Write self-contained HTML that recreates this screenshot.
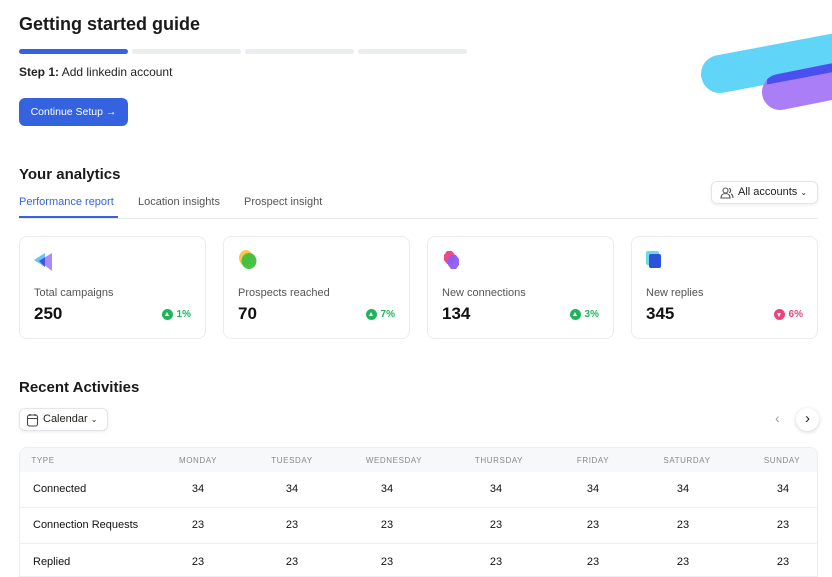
<!DOCTYPE html>
<html><head><meta charset="utf-8"><style>
*{margin:0;padding:0;box-sizing:border-box}
body{width:832px;height:570px;overflow:hidden;background:#fff;font-family:"Liberation Sans",sans-serif;color:#111;position:relative}
.a{position:absolute;white-space:nowrap}
.bar{position:absolute;top:49px;height:5px;border-radius:3px;background:#e9ecf1;width:109px}
.card{position:absolute;top:236px;width:187px;height:103px;border:1px solid #ececf0;border-radius:8px;background:#fff}
.card .l{position:absolute;left:14px;top:50px;font-size:11px;color:#555}
.card .v{position:absolute;left:14px;top:67px;font-size:17px;font-weight:bold;color:#111}
.card .b{position:absolute;right:14px;top:72px;font-size:10px;font-weight:bold;color:#22b35e;display:flex;align-items:center;gap:4px}
.card .b i{display:inline-block;width:11px;height:11px;border-radius:50%;background:#22b35e;position:relative}
.card .b i:after{content:"";position:absolute;left:3px;top:3px;border-left:2.5px solid transparent;border-right:2.5px solid transparent;border-bottom:4px solid #fff}
.card .b.r{color:#e8457e}.card .b.r i{background:#e8457e}
.card .b.r i:after{border-bottom:none;border-top:4px solid #fff;top:4px}
.th{position:absolute;top:456px;font-size:8px;color:#888;letter-spacing:.6px;transform:translateX(-50%)}
.td{position:absolute;font-size:11px;color:#111;transform:translateX(-50%)}
.rl{position:absolute;left:33px;font-size:11px;color:#111}
.hl{position:absolute;left:19px;width:799px;height:1px;background:#eef0f3}
</style></head><body>
<div class="a" style="left:19px;top:14px;font-size:18px;font-weight:bold;color:#1a1a1a">Getting started guide</div>
<div class="bar" style="left:19px;background:#3563e0"></div>
<div class="bar" style="left:132px"></div>
<div class="bar" style="left:245px"></div>
<div class="bar" style="left:358px"></div>
<div class="a" style="left:19px;top:65px;font-size:12px;color:#222"><b>Step 1:</b> Add linkedin account</div>
<div class="a" style="left:19px;top:98px;width:109px;height:28px;border-radius:6px;background:#3563e0;color:#fff;font-size:10.5px;line-height:28px;text-align:center">Continue Setup →</div>
<svg class="a" style="left:690px;top:20px" width="142" height="100">
<defs><mask id="m"><rect width="142" height="100" fill="#000"/><line x1="30" y1="54" x2="200" y2="22" stroke="#fff" stroke-width="38" stroke-linecap="round"/></mask></defs>
<line x1="30" y1="54" x2="200" y2="22" stroke="#60d5f8" stroke-width="38" stroke-linecap="round"/>
<line x1="90" y1="72" x2="220" y2="46" stroke="#a97ef7" stroke-width="36" stroke-linecap="round"/>
<line x1="90" y1="72" x2="220" y2="46" stroke="#4b4ff0" stroke-width="36" stroke-linecap="round" mask="url(#m)"/>
</svg>
<div class="a" style="left:19px;top:166px;font-size:15px;font-weight:bold;color:#1a1a1a">Your analytics</div>
<div class="a" style="left:19px;top:196px;font-size:11px;color:#3563e0">Performance report</div>
<div class="a" style="left:138px;top:196px;font-size:11px;color:#555">Location insights</div>
<div class="a" style="left:244px;top:196px;font-size:11px;color:#555">Prospect insight</div>
<div class="a" style="left:19px;top:218px;width:799px;height:1px;background:#e8eaee"></div>
<div class="a" style="left:19px;top:216px;width:99px;height:2px;background:#3563e0"></div>
<div class="a" style="left:711px;top:181px;width:107px;height:23px;border:1px solid #e3e5ea;border-radius:6px;box-shadow:0 1px 3px rgba(0,0,0,.08);font-size:11px;line-height:21px;padding-left:26px;color:#222">All accounts <span style="font-size:8px">⌄</span>
<svg style="position:absolute;left:8px;top:4px" width="14" height="14" fill="none" stroke="#555" stroke-width="1.1"><circle cx="5.5" cy="4.5" r="2.5"/><path d="M1 12c0-3 2-4.5 4.5-4.5S10 9 10 12z"/><path d="M9 2.3a2.3 2.3 0 010 4.4M11 8c1.3.6 2 2 2 4"/></svg></div>

<div class="card" style="left:19px"><svg style="position:absolute;left:13px;top:14px" width="22" height="22"><path d="M1 9 L12 2 L12 16Z" fill="#5fc8f5"/><path d="M6 10 L19 2 L19 20Z" fill="#a98bf6"/><path d="M6 10 L12 6.3 L12 16 Z" fill="#4c4fe6"/></svg><div class="l">Total campaigns</div><div class="v">250</div><div class="b"><i></i>1%</div></div>
<div class="card" style="left:223px"><svg style="position:absolute;left:13px;top:12px" width="24" height="24"><ellipse cx="9" cy="9" rx="7" ry="8" fill="#f5c84b"/><ellipse cx="12" cy="12" rx="7.5" ry="8" fill="#3fbf3f" opacity=".95"/></svg><div class="l">Prospects reached</div><div class="v">70</div><div class="b"><i></i>7%</div></div>
<div class="card" style="left:427px"><svg style="position:absolute;left:13px;top:12px" width="24" height="24"><path d="M6 2h5l3 4v5l-3 4H6L3 11V6z" fill="#ea4a8a"/><path d="M10 6h5l3 4v6l-3 4h-5l-3-4v-6z" fill="#8c5cf5" opacity=".95"/></svg><div class="l">New connections</div><div class="v">134</div><div class="b"><i></i>3%</div></div>
<div class="card" style="left:631px"><svg style="position:absolute;left:13px;top:12px" width="24" height="24"><rect x="1" y="2" width="13" height="14" rx="2" fill="#6ad9ea"/><rect x="4" y="5" width="12" height="14" rx="2" fill="#2b52d8"/></svg><div class="l">New replies</div><div class="v">345</div><div class="b r"><i></i>6%</div></div>

<div class="a" style="left:19px;top:379px;font-size:15px;font-weight:bold;color:#1a1a1a">Recent Activities</div>
<div class="a" style="left:19px;top:408px;width:89px;height:23px;border:1px solid #e3e5ea;border-radius:6px;box-shadow:0 1px 3px rgba(0,0,0,.08);font-size:11px;line-height:21px;padding-left:23px;color:#222">Calendar <span style="font-size:8px">⌄</span>
<svg style="position:absolute;left:6px;top:4px" width="13" height="14" fill="none" stroke="#444" stroke-width="1.1"><rect x="1.5" y="2" width="10" height="11" rx="2"/><path d="M1.5 5.5h10M4 1v2M9 1v2"/></svg></div>
<div class="a" style="left:775px;top:410px;font-size:14px;color:#999">‹</div>
<div class="a" style="left:796px;top:408px;width:23px;height:23px;border-radius:50%;background:#fff;box-shadow:0 1px 4px rgba(0,0,0,.18);text-align:center;font-size:15px;line-height:21px;color:#222">›</div>

<div class="a" style="left:19px;top:447px;width:799px;height:130px;border:1px solid #eceef2;border-radius:8px 8px 0 0;overflow:hidden"><div style="height:24px;background:#f7f8fa"></div></div>
<div class="th" style="left:43px">TYPE</div>
<div class="th" style="left:198px">MONDAY</div><div class="th" style="left:292px">TUESDAY</div><div class="th" style="left:394px">WEDNESDAY</div><div class="th" style="left:499px">THURSDAY</div><div class="th" style="left:593px">FRIDAY</div><div class="th" style="left:687px">SATURDAY</div><div class="th" style="left:782px">SUNDAY</div>
<div class="hl" style="top:507px"></div><div class="hl" style="top:543px"></div>
<div class="rl" style="top:483px">Connected</div>
<div class="rl" style="top:519px">Connection Requests</div>
<div class="rl" style="top:556px">Replied</div>
<div id="cells"></div>
<script>
var xs=[198,292,387,496,593,683,783],rows=[[483,"34"],[519,"23"],[556,"23"]],h="";
rows.forEach(function(r){xs.forEach(function(x){h+='<div class="td" style="left:'+x+'px;top:'+r[0]+'px">'+r[1]+'</div>'})});
document.getElementById("cells").innerHTML=h;
</script>
</body></html>
